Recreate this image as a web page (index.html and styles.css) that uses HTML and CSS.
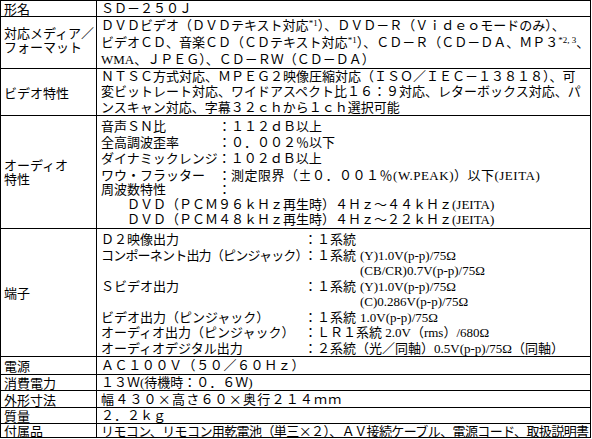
FILE: index.html
```html
<!DOCTYPE html>
<html lang="ja">
<head>
<meta charset="utf-8">
<title>SD-250J 仕様</title>
<link rel="stylesheet" href="styles.css">
</head>
<body>
<table class="spec">
  <tr>
    <th>形名</th>
    <td><div class="ln h15">ＳＤ－２５０Ｊ</div></td>
  </tr>
  <tr>
    <th class="two up">対応メディア／<br>フォーマット</th>
    <td>
      <div class="ln h17">ＤＶＤビデオ（ＤＶＤテキスト対応<sup>*1</sup>）、ＤＶＤ－Ｒ（Ｖｉｄｅｏモードのみ）、</div>
      <div class="ln h17">ビデオＣＤ、音楽ＣＤ（ＣＤテキスト対応<sup>*1</sup>）、ＣＤ－Ｒ（ＣＤ－ＤＡ、ＭＰ３<sup>*2, 3</sup>、</div>
      <div class="ln h17">WMA、ＪＰＥＧ）、ＣＤ－ＲＷ（ＣＤ－ＤＡ）</div>
    </td>
  </tr>
  <tr>
    <th>ビデオ特性</th>
    <td>
      <div class="ln h15">ＮＴＳＣ方式対応、ＭＰＥＧ２映像圧縮対応（ＩＳＯ／ＩＥＣ－１３８１８）、可</div>
      <div class="ln h16">変ビットレート対応、ワイドアスペクト比１６：９対応、レターボックス対応、パ</div>
      <div class="ln h15">ンスキャン対応、字幕３２ｃｈから１ｃｈ選択可能</div>
    </td>
  </tr>
  <tr>
    <th class="two">オーディオ<br>特性</th>
    <td class="audio">
      <div class="ln h16">音声ＳＮ比　　　　：１１２ｄＢ以上</div>
      <div class="ln h16">全高調波歪率　　　：０．００２％以下</div>
      <div class="ln h16">ダイナミックレンジ：１０２ｄＢ以上</div>
      <div class="ln h15">ワウ・フラッター　：<span class="loose">測定限界（<span class="cjk">±</span>０．００１％(W.PEAK)）以下(JEITA)</span></div>
      <div class="ln h16">周波数特性　　　　：</div>
      <div class="ln h14">　　ＤＶＤ（ＰＣＭ９６ｋＨｚ再生時）４Ｈｚ～４４ｋＨｚ(JEITA)</div>
      <div class="ln h15">　　ＤＶＤ（ＰＣＭ４８ｋＨｚ再生時）４Ｈｚ～２２ｋＨｚ(JEITA)</div>
    </td>
  </tr>
  <tr>
    <th>端子</th>
    <td class="terminal">
      <div class="term">
        <span class="tn">Ｄ２映像出力</span><span class="tc">：１系統</span><span class="tv"></span>
        <span class="tn squeeze">コンポーネント出力（ピンジャック）</span><span class="tc">：１系統</span><span class="tv">(Y)1.0V(p-p)/75Ω</span>
        <span class="tn"></span><span class="tc"></span><span class="tv">(CB/CR)0.7V(p-p)/75Ω</span>
        <span class="tn">Ｓビデオ出力</span><span class="tc">：１系統</span><span class="tv">(Y)1.0V(p-p)/75Ω</span>
        <span class="tn"></span><span class="tc"></span><span class="tv">(C)0.286V(p-p)/75Ω</span>
        <span class="tn">ビデオ出力（ピンジャック）</span><span class="tc">：１系統</span><span class="tv">1.0V(p-p)/75Ω</span>
        <span class="tn">オーディオ出力（ピンジャック）</span><span class="tw">：ＬＲ１系統 2.0V（rms）/680Ω</span>
        <span class="tn">オーディオデジタル出力</span><span class="tw">：２系統（光／同軸）0.5V(p-p)/75Ω（同軸）</span>
      </div>
    </td>
  </tr>
  <tr>
    <th>電源</th>
    <td><div class="ln h17 wide1">ＡＣ１００Ｖ（５０／６０Ｈｚ）</div></td>
  </tr>
  <tr>
    <th>消費電力</th>
    <td><div class="ln h15">１３Ｗ(待機時：０．６Ｗ)</div></td>
  </tr>
  <tr>
    <th>外形寸法</th>
    <td><div class="ln h16 wide2">幅４３０<span class="cjk">×</span>高さ６０<span class="cjk">×</span>奥行２１４ｍｍ</div></td>
  </tr>
  <tr>
    <th>質量</th>
    <td><div class="ln h15">２．２ｋｇ</div></td>
  </tr>
  <tr>
    <th>付属品</th>
    <td><div class="ln h13 narrow">リモコン、リモコン用乾電池（単三<span class="cjk">×</span>２）、ＡＶ接続ケーブル、電源コード、取扱説明書</div></td>
  </tr>
</table>
</body>
</html>
```

FILE: styles.css
```css
html, body {
  margin: 0;
  padding: 0;
  background: #ffffff;
}

body {
  font-family: "Liberation Serif", "Noto Sans CJK JP", serif;
  font-size: 13px;
  color: #000000;
}

.cjk {
  font-family: "Noto Sans CJK JP", sans-serif;
}

.spec {
  border-collapse: separate;
  border-spacing: 0;
  table-layout: fixed;
  width: 591px;
  border-top: 1px solid #000;
  border-left: 1px solid #000;
}

.spec th,
.spec td {
  border-right: 1px solid #000;
  border-bottom: 1px solid #000;
  padding: 0;
  vertical-align: middle;
  white-space: nowrap;
  box-sizing: border-box;
}

.spec th {
  width: 96px;
  font-weight: normal;
  text-align: left;
  padding-left: 3px;
  font-family: "Noto Sans CJK JP", sans-serif;
  line-height: 13px;
}

.spec th.two {
  line-height: 14px;
}

.spec th.up {
  padding-bottom: 5px;
}

.spec td {
  padding-left: 4px;
  line-height: 13px;
}

.spec td.audio {
  padding-top: 3px;
  padding-bottom: 1px;
}

.spec td.terminal {
  padding-top: 3px;
}

.ln {
  white-space: nowrap;
}

.h13 { height: 13px; line-height: 13px; }
.h14 { height: 14px; line-height: 14px; }
.h15 { height: 15px; line-height: 15px; }
.h16 { height: 16px; line-height: 16px; }
.h17 { height: 17px; line-height: 17px; }

.wide1 { letter-spacing: 0.6px; }
.wide2 { letter-spacing: 1.2px; }
.narrow { letter-spacing: -0.6px; }
.loose { letter-spacing: 0.5px; }

.spec sup {
  font-size: 9px;
  line-height: 0;
  vertical-align: 4px;
}

.term {
  display: grid;
  grid-template-columns: 203px 56px 1fr;
  grid-auto-rows: 15.5px;
  line-height: 15.5px;
}

.tn {
  white-space: nowrap;
}

.squeeze {
  letter-spacing: -0.8px;
}

.tc {
  background: #fff;
  position: relative;
}

.tw {
  grid-column: 2 / 4;
  background: #fff;
  position: relative;
  white-space: nowrap;
}
```
